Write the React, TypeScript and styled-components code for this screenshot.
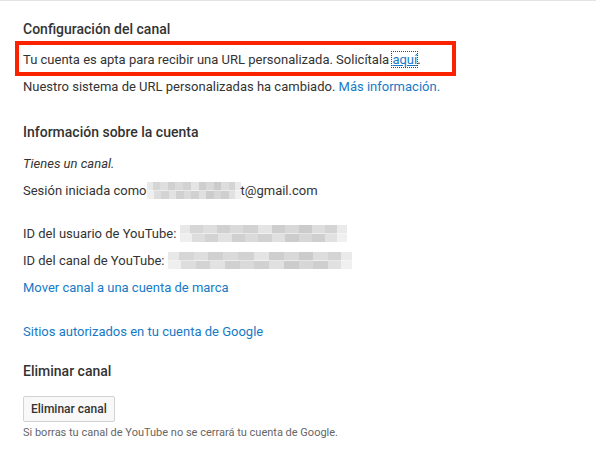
import React from 'react';
import styled, { createGlobalStyle } from 'styled-components';

const GlobalStyle = createGlobalStyle`
  html, body {
    margin: 0;
    padding: 0;
    background: #fff;
  }
  body {
    font-family: Roboto, "Liberation Sans", Arial, sans-serif;
    color: #333;
  }
`;

const Page = styled.div`
  width: 596px;
  height: 469px;
  border-top: 1px solid #e3e3e3;
  padding: 19px 0 0 23px;
  box-sizing: border-box;
`;

const Heading = styled.h2<{ $top?: number }>`
  margin: ${({ $top }) => $top || 0}px 0 0;
  font-size: 14px;
  font-weight: 500;
  line-height: 18px;
  color: #333;
`;

const Row = styled.p<{ $top?: number; $italic?: boolean }>`
  margin: ${({ $top }) => $top || 0}px 0 0;
  font-size: 13px;
  line-height: 27px;
  color: #333;
  white-space: nowrap;
  font-style: ${({ $italic }) => ($italic ? 'italic' : 'normal')};
`;

const Highlight = styled.div`
  width: 429px;
  margin: 3px 0 -3px -8px;
  padding: 3px 0 0 4px;
  border: 4px solid #fb2200;
  font-size: 13px;
  line-height: 24px;
  color: #333;
  white-space: nowrap;
`;

const Link = styled.a<{ $focus?: boolean }>`
  color: #167ac6;
  text-decoration: ${({ $focus }) => ($focus ? 'underline' : 'none')};
  outline: ${({ $focus }) => ($focus ? '1px dotted #444' : 'none')};
  outline-offset: 0;
  cursor: pointer;
`;

const Blur = styled.span<{ $w: number }>`
  display: inline-block;
  width: ${({ $w }) => $w}px;
  height: 17px;
  vertical-align: -4px;
  background:
    linear-gradient(90deg, #e8e8e8 0 6%, #d6d6d6 6% 14%, #dedede 14% 22%, #d0d0d0 22% 30%, #dadada 30% 38%, #d2d2d2 38% 47%, #e4e4e4 47% 55%, #cecece 55% 63%, #d8d8d8 63% 71%, #cbcbcb 71% 79%, #dddddd 79% 87%, #d4d4d4 87% 94%, #eaeaea 94% 100%) top / 100% 50% no-repeat,
    linear-gradient(90deg, #efefef 0 7%, #dddddd 7% 15%, #d3d3d3 15% 23%, #e2e2e2 23% 31%, #d0d0d0 31% 39%, #dadada 39% 47%, #d1d1d1 47% 55%, #e0e0e0 55% 63%, #cccccc 63% 71%, #d7d7d7 71% 79%, #cfcfcf 79% 87%, #e1e1e1 87% 94%, #f0f0f0 94% 100%) bottom / 100% 50% no-repeat;
`;

const Button = styled.button`
  display: block;
  margin-top: 16px;
  height: 26px;
  padding: 0 7px;
  background: #f8f8f8;
  border: 1px solid #d3d3d3;
  border-radius: 2px;
  font-family: inherit;
  font-size: 12px;
  font-weight: 500;
  color: #333;
  cursor: pointer;
`;

const Note = styled.p`
  margin: 3px 0 0;
  font-size: 11px;
  line-height: 16px;
  color: #666;
`;

export default function App() {
  return (
    <>
      <GlobalStyle />
      <Page>
        <Heading>Configuración del canal</Heading>
        <Highlight>
          Tu cuenta es apta para recibir una URL personalizada. Solicítala <Link $focus>aquí</Link>.
        </Highlight>
        <Row>
          Nuestro sistema de URL personalizadas ha cambiado. <Link>Más información.</Link>
        </Row>

        <Heading $top={23}>Información sobre la cuenta</Heading>
        <Row $top={9} $italic>Tienes un canal.</Row>
        <Row>
          Sesión iniciada como<Blur $w={94} />t@gmail.com
        </Row>

        <Row $top={16}>
          ID del usuario de YouTube: <Blur $w={167} />
        </Row>
        <Row>
          ID del canal de YouTube: <Blur $w={184} />
        </Row>
        <Row>
          <Link>Mover canal a una cuenta de marca</Link>
        </Row>

        <Row $top={17}>
          <Link>Sitios autorizados en tu cuenta de Google</Link>
        </Row>

        <Heading $top={17}>Eliminar canal</Heading>
        <Button>Eliminar canal</Button>
        <Note>Si borras tu canal de YouTube no se cerrará tu cuenta de Google.</Note>
      </Page>
    </>
  );
}
